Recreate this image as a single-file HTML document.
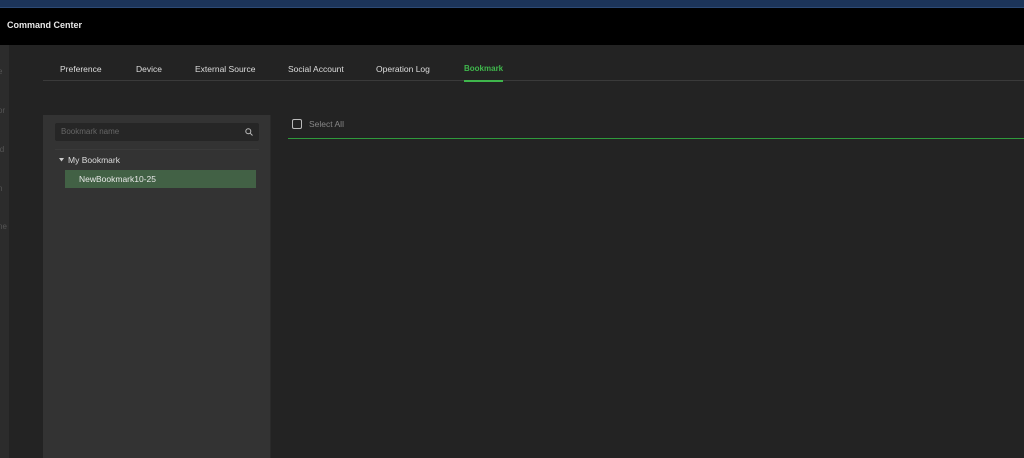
<!DOCTYPE html>
<html><head><style>
*{margin:0;padding:0;box-sizing:border-box}
body{width:1024px;height:458px;overflow:hidden;background:#232323;font-family:"Liberation Sans",sans-serif;position:relative;color:#ddd}
.a{position:absolute}
.tab{position:absolute;top:64px;font-size:8.5px;color:#ddd}
.side{font-size:8px;color:#555;left:-2px}
</style></head><body>
<div class="a" style="left:0;top:0;width:1024px;height:8px;background:#1c3459"></div>
<div class="a" style="left:0;top:7px;width:1024px;height:1px;background:#2d4a75"></div>
<div class="a" style="left:0;top:8px;width:1024px;height:37px;background:#000"></div>
<div class="a" style="left:7px;top:20px;font-size:9px;font-weight:bold;color:#e8e8e8">Command Center</div>
<div class="a" style="left:0;top:45px;width:9px;height:413px;background:#2c2c2c"></div>
<div class="a side" style="top:67px">e</div>
<div class="a side" style="top:106px">or</div>
<div class="a side" style="top:145px">id</div>
<div class="a side" style="top:184px">n</div>
<div class="a side" style="top:222px">ne</div>
<div class="tab" style="left:60px">Preference</div>
<div class="tab" style="left:136px">Device</div>
<div class="tab" style="left:195px">External Source</div>
<div class="tab" style="left:288px">Social Account</div>
<div class="tab" style="left:376px">Operation Log</div>
<div class="tab" style="left:464px;color:#3fb64c;font-weight:bold;font-size:8px">Bookmark</div>
<div class="a" style="left:43px;top:80px;width:981px;height:1px;background:#3a3a3a"></div>
<div class="a" style="left:464px;top:80px;width:39px;height:2px;background:#3fb64c"></div>
<div class="a" style="left:43px;top:115px;width:227px;height:343px;background:#333"></div>
<div class="a" style="left:55px;top:123px;width:204px;height:18px;background:#262626;border-radius:2px"></div>
<div class="a" style="left:61px;top:127px;font-size:8px;color:#666">Bookmark name</div>
<svg class="a" style="left:245px;top:128px" width="8" height="8" viewBox="0 0 8 8"><circle cx="3.3" cy="3.3" r="2.5" fill="none" stroke="#bbb" stroke-width="1"/><line x1="5.2" y1="5.2" x2="7.5" y2="7.5" stroke="#bbb" stroke-width="1"/></svg>
<div class="a" style="left:55px;top:149px;width:204px;height:1px;background:#3a3a3a"></div>
<svg class="a" style="left:59px;top:158px" width="6" height="4"><polygon points="0,0 5,0 2.5,3.5" fill="#ccc"/></svg>
<div class="a" style="left:68px;top:155px;font-size:8.5px;color:#ddd">My Bookmark</div>
<div class="a" style="left:65px;top:170px;width:191px;height:18px;background:#426145"></div>
<div class="a" style="left:79px;top:174px;font-size:8.5px;color:#e8e8e8">NewBookmark10-25</div>
<div class="a" style="left:270px;top:115px;width:1px;height:343px;background:#2a2a2a"></div>
<div class="a" style="left:292px;top:119px;width:10px;height:10px;border:1px solid #bbb;border-radius:2px"></div>
<div class="a" style="left:309px;top:119px;font-size:8.5px;color:#888">Select All</div>
<div class="a" style="left:288px;top:138px;width:736px;height:1px;background:#2f9a3c"></div>
</body></html>
